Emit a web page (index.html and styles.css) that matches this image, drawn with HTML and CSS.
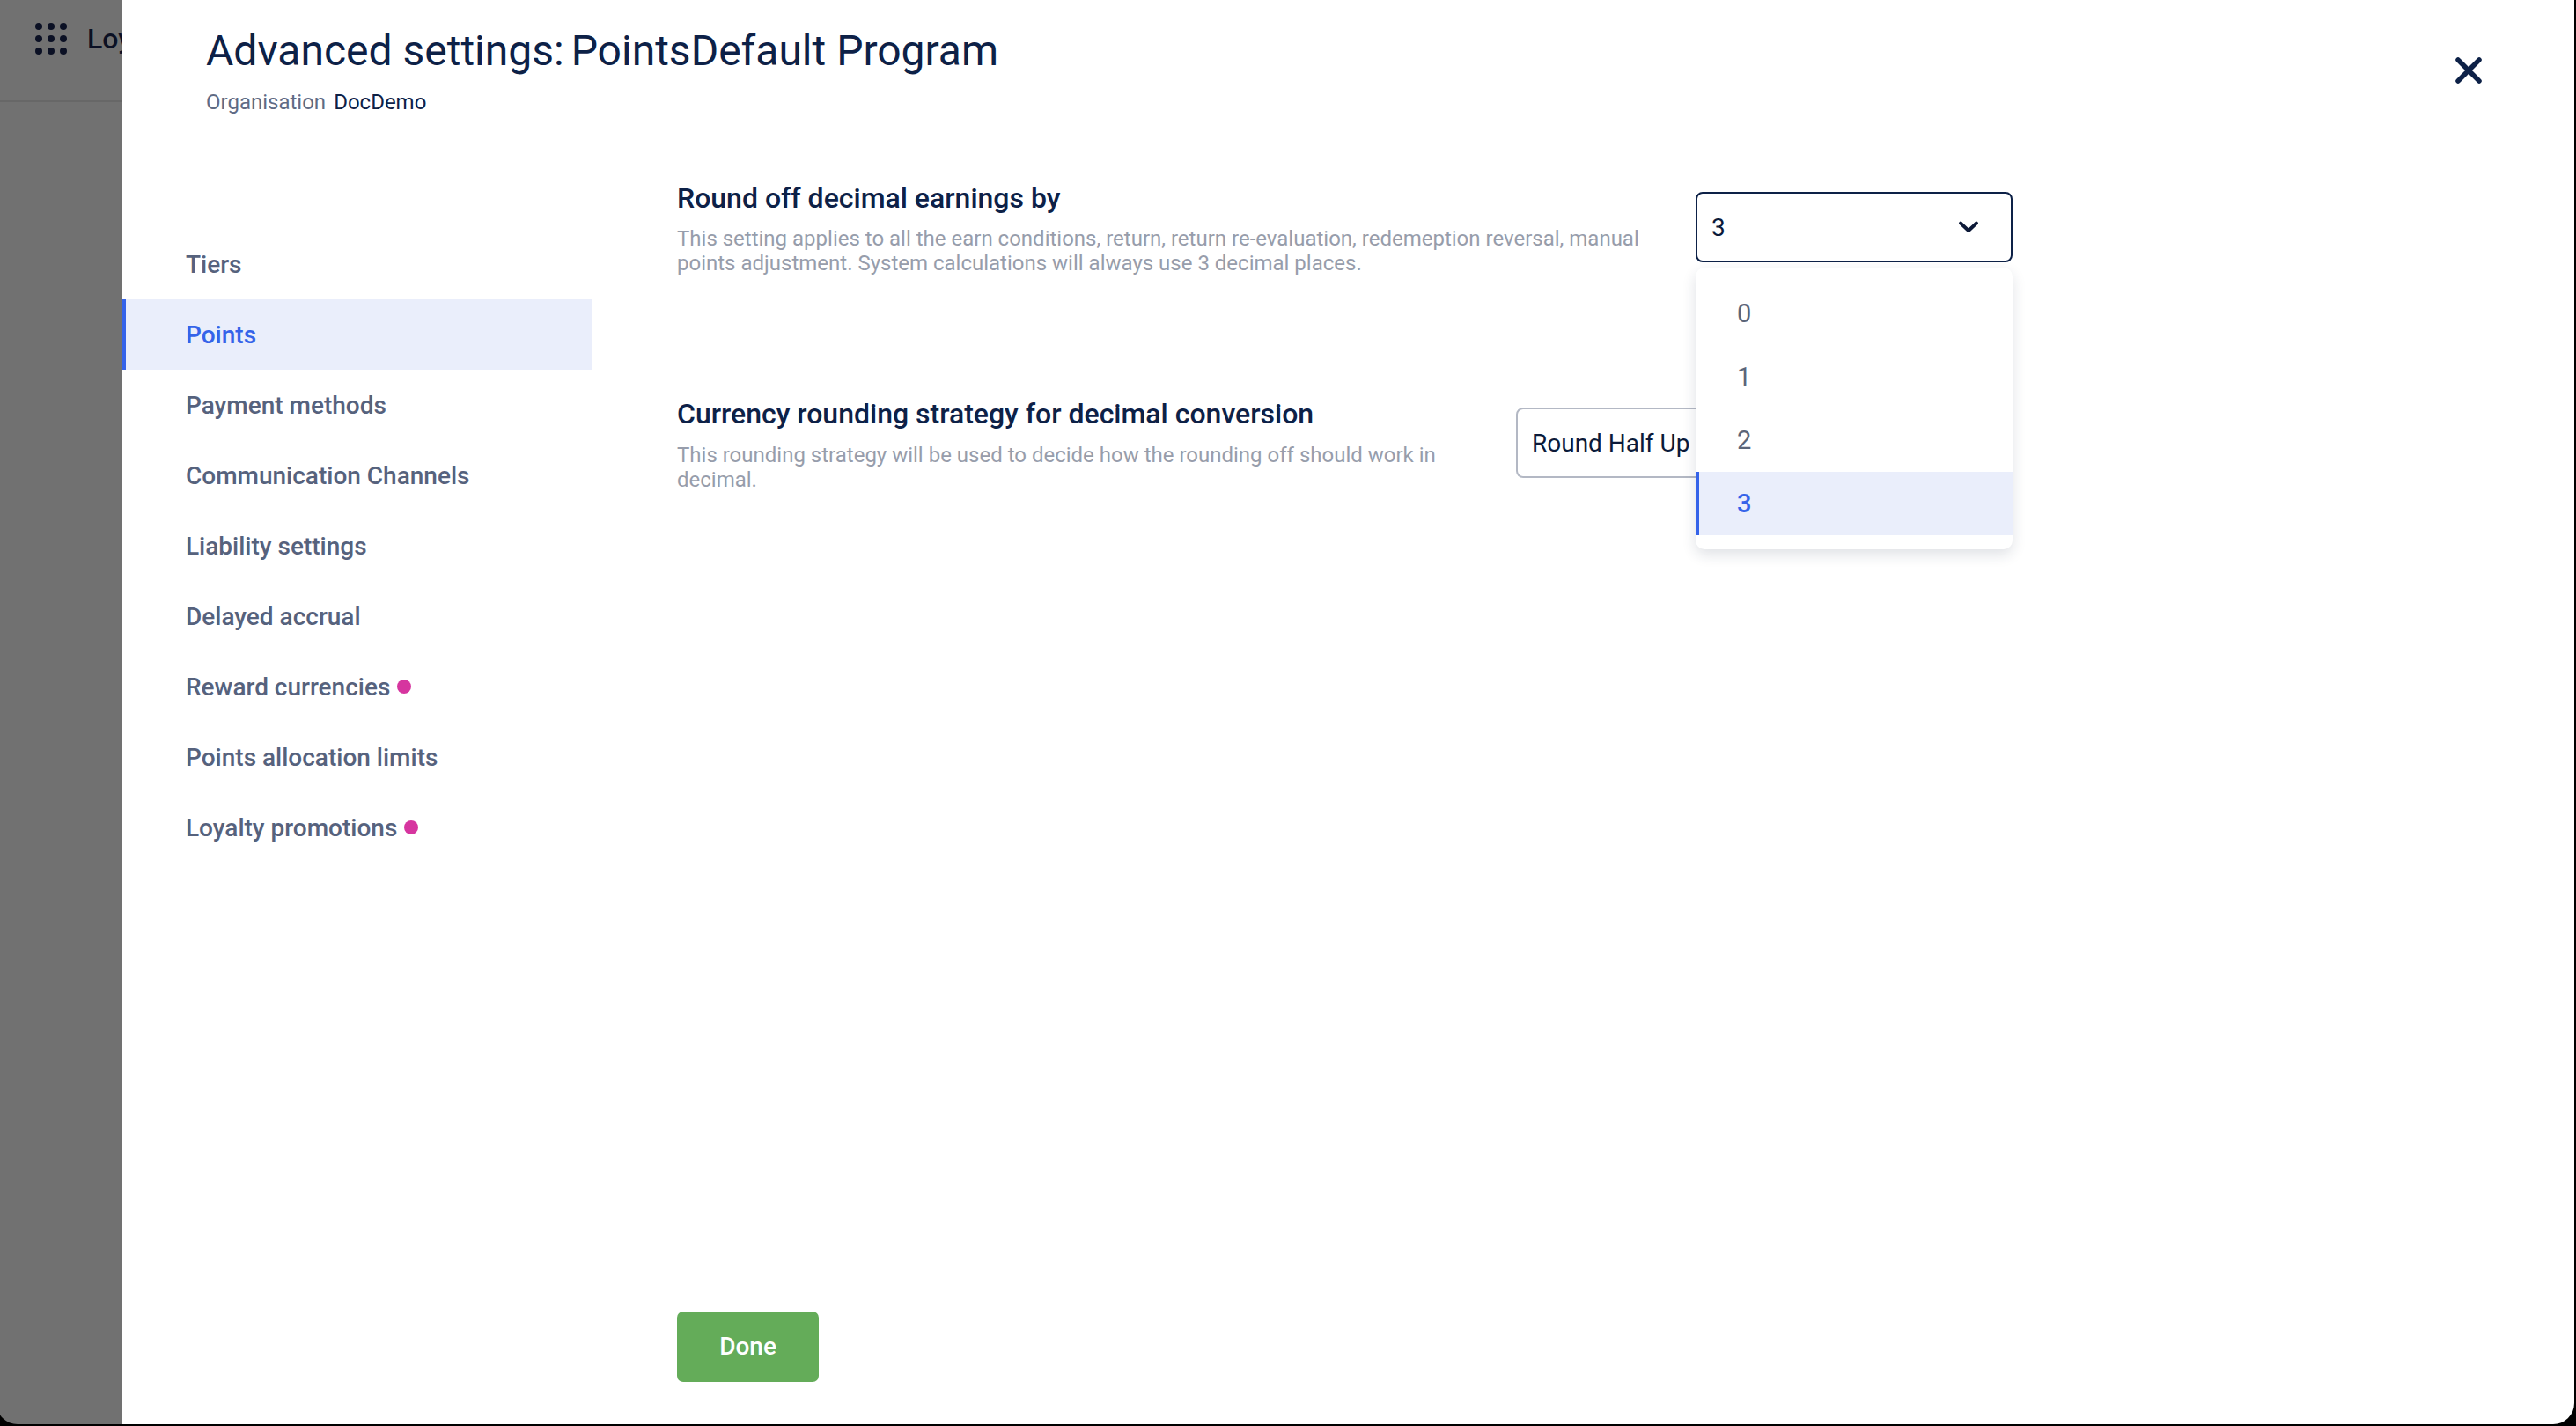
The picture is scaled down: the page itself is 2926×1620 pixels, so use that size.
FILE: index.html
```html
<!DOCTYPE html>
<html lang="en">
<head>
<meta charset="utf-8">
<title>Advanced settings</title>
<link rel="stylesheet" href="styles.css">
</head>
<body>
<div class="backdrop">
  <header class="appbar">
    <svg class="apps" width="36" height="36" viewBox="0 0 36 36"><g fill="#0b1024"><circle cx="4" cy="4" r="4"/><circle cx="18" cy="4" r="4"/><circle cx="32" cy="4" r="4"/><circle cx="4" cy="18" r="4"/><circle cx="18" cy="18" r="4"/><circle cx="32" cy="18" r="4"/><circle cx="4" cy="32" r="4"/><circle cx="18" cy="32" r="4"/><circle cx="32" cy="32" r="4"/></g></svg>
    <span class="appname">Loy</span>
  </header>
</div>
<main class="panel">
  <div class="head">
    <div>
      <h1 class="title"><span>Advanced settings:</span><span>PointsDefault Program</span></h1>
      <div class="org"><span class="org-label">Organisation</span><span class="org-name">DocDemo</span></div>
    </div>
    <svg class="close" width="30" height="30" viewBox="0 0 30 30"><path d="M3 3 L27 27 M27 3 L3 27" stroke="#0d2147" stroke-width="5.5" stroke-linecap="round" fill="none"/></svg>
  </div>
  <div class="body">
    <nav class="nav">
      <a class="nav-item">Tiers</a>
      <a class="nav-item active">Points</a>
      <a class="nav-item">Payment methods</a>
      <a class="nav-item">Communication Channels</a>
      <a class="nav-item">Liability settings</a>
      <a class="nav-item">Delayed accrual</a>
      <a class="nav-item">Reward currencies<i class="dot"></i></a>
      <a class="nav-item">Points allocation limits</a>
      <a class="nav-item">Loyalty promotions<i class="dot"></i></a>
    </nav>
    <section class="content">
      <div class="settings">
        <div class="setting first">
          <div class="text first-text">
            <h2 class="s-title">Round off decimal earnings by</h2>
            <p class="s-desc">This setting applies to all the earn conditions, return, return re-evaluation, redemeption reversal, manual points adjustment. System calculations will always use 3 decimal places.</p>
          </div>
          <div class="select-wrap">
            <div class="select focus"><span>3</span>
              <svg class="chev" width="24" height="16" viewBox="0 0 24 16"><path d="M3 3.5 L12 12 L21 3.5" stroke="#0d1a38" stroke-width="3.8" stroke-linecap="round" stroke-linejoin="round" fill="none"/></svg>
            </div>
            <ul class="menu">
              <li class="opt">0</li>
              <li class="opt">1</li>
              <li class="opt">2</li>
              <li class="opt sel">3</li>
            </ul>
          </div>
        </div>
        <div class="setting second">
          <div class="text second-text">
            <h2 class="s-title">Currency rounding strategy for decimal conversion</h2>
            <p class="s-desc">This rounding strategy will be used to decide how the rounding off should work in decimal.</p>
          </div>
          <div class="select plain"><span>Round Half Up</span></div>
        </div>
      </div>
      <button class="done">Done</button>
    </section>
  </div>
</main>
<div class="frame"></div>
</body>
</html>
```
FILE: styles.css
```css
* { box-sizing: border-box; }
html, body { margin: 0; height: 100%; }
body {
  display: flex;
  position: relative;
  width: 2926px;
  height: 1620px;
  overflow: hidden;
  background: #717171;
  font-family: Roboto, "Liberation Sans", sans-serif;
  color: #0d2147;
}
.backdrop { width: 139px; flex: none; overflow: hidden; }
.appbar {
  display: flex;
  align-items: center;
  gap: 23px;
  height: 116px;
  padding: 0 0 26px 40px;
  border-bottom: 2px solid #676767;
}
.apps { flex: none; }
.appname { flex: none; font-size: 32px; font-weight: 500; color: #0b1024; }
.panel {
  flex: 1;
  display: flex;
  flex-direction: column;
  background: #fff;
  min-width: 0;
}
.head {
  display: flex;
  justify-content: space-between;
  align-items: flex-start;
  height: 200px;
  padding: 30px 0 0 95px;
}
.title { display: flex; gap: 8px; margin: 0; font-size: 48px; line-height: 56px; font-weight: 400; color: #0d2147; }
.org { display: flex; gap: 9px; margin-top: 15px; font-size: 24px; line-height: 30px; }
.org-label { color: #5f6b85; }
.org-name { color: #0d2147; }
.close { margin: 35px 107px 0 0; flex: none; }
.body { flex: 1; display: flex; min-height: 0; }
.nav { width: 534px; flex: none; padding-top: 60px; }
.nav-item {
  display: flex;
  align-items: center;
  height: 80px;
  padding-left: 72px;
  font-size: 28px;
  font-weight: 500;
  color: #56627d;
}
.nav-item.active {
  padding-left: 68px;
  border-left: 4px solid #3563e9;
  background: #eaeefb;
  color: #3563e9;
}
.dot {
  width: 16px;
  height: 16px;
  margin-left: 8px;
  border-radius: 50%;
  background: #d6359f;
}
.content {
  flex: 1;
  display: flex;
  flex-direction: column;
  justify-content: space-between;
  padding: 0 0 50px 96px;
  min-width: 0;
}
.setting { display: flex; align-items: flex-start; }
.first { height: 245px; }
.first-text { width: 1157px; }
.second-text { width: 953px; }
.s-title { margin: 5px 0 0; font-size: 32px; line-height: 40px; font-weight: 500; color: #0d2147; }
.s-desc { margin: 12px 0 0; font-size: 24px; line-height: 28px; color: #979dab; }
.second .s-desc { margin-top: 13px; }
.select-wrap { width: 360px; position: relative; z-index: 2; margin-top: 18px; }
.select {
  display: flex;
  align-items: center;
  justify-content: space-between;
  height: 80px;
  padding: 0 36px 0 16px;
  border-radius: 8px;
  font-size: 28px;
  color: #0b1a3a;
  background: #fff;
}
.focus { border: 2px solid #0d2147; }
.plain { width: 360px; margin-top: 18px; border: 2px solid #b3b8c4; }
.menu {
  position: absolute;
  top: 86px;
  left: 0;
  width: 360px;
  height: 320px;
  margin: 0;
  padding: 16px 0;
  list-style: none;
  background: #fff;
  border-radius: 10px;
  box-shadow: 0 6px 16px rgba(30, 40, 70, .14);
}
.opt {
  display: flex;
  align-items: center;
  height: 72px;
  padding-left: 47px;
  font-size: 29px;
  color: #5b6579;
}
.opt.sel {
  padding-left: 43px;
  border-left: 4px solid #3563e9;
  background: #eaeefb;
  color: #3563e9;
  font-weight: 500;
}
.done {
  align-self: flex-start;
  width: 161px;
  height: 80px;
  padding: 0 0 2px;
  border: 0;
  border-radius: 7px;
  background: #64ac59;
  color: #fff;
  font: 500 28px Roboto, sans-serif;
}
.frame {
  position: absolute;
  left: -4px;
  top: -30px;
  right: 2px;
  bottom: 2px;
  border-radius: 24px;
  box-shadow: 0 0 0 30px #000;
  pointer-events: none;
}
```
